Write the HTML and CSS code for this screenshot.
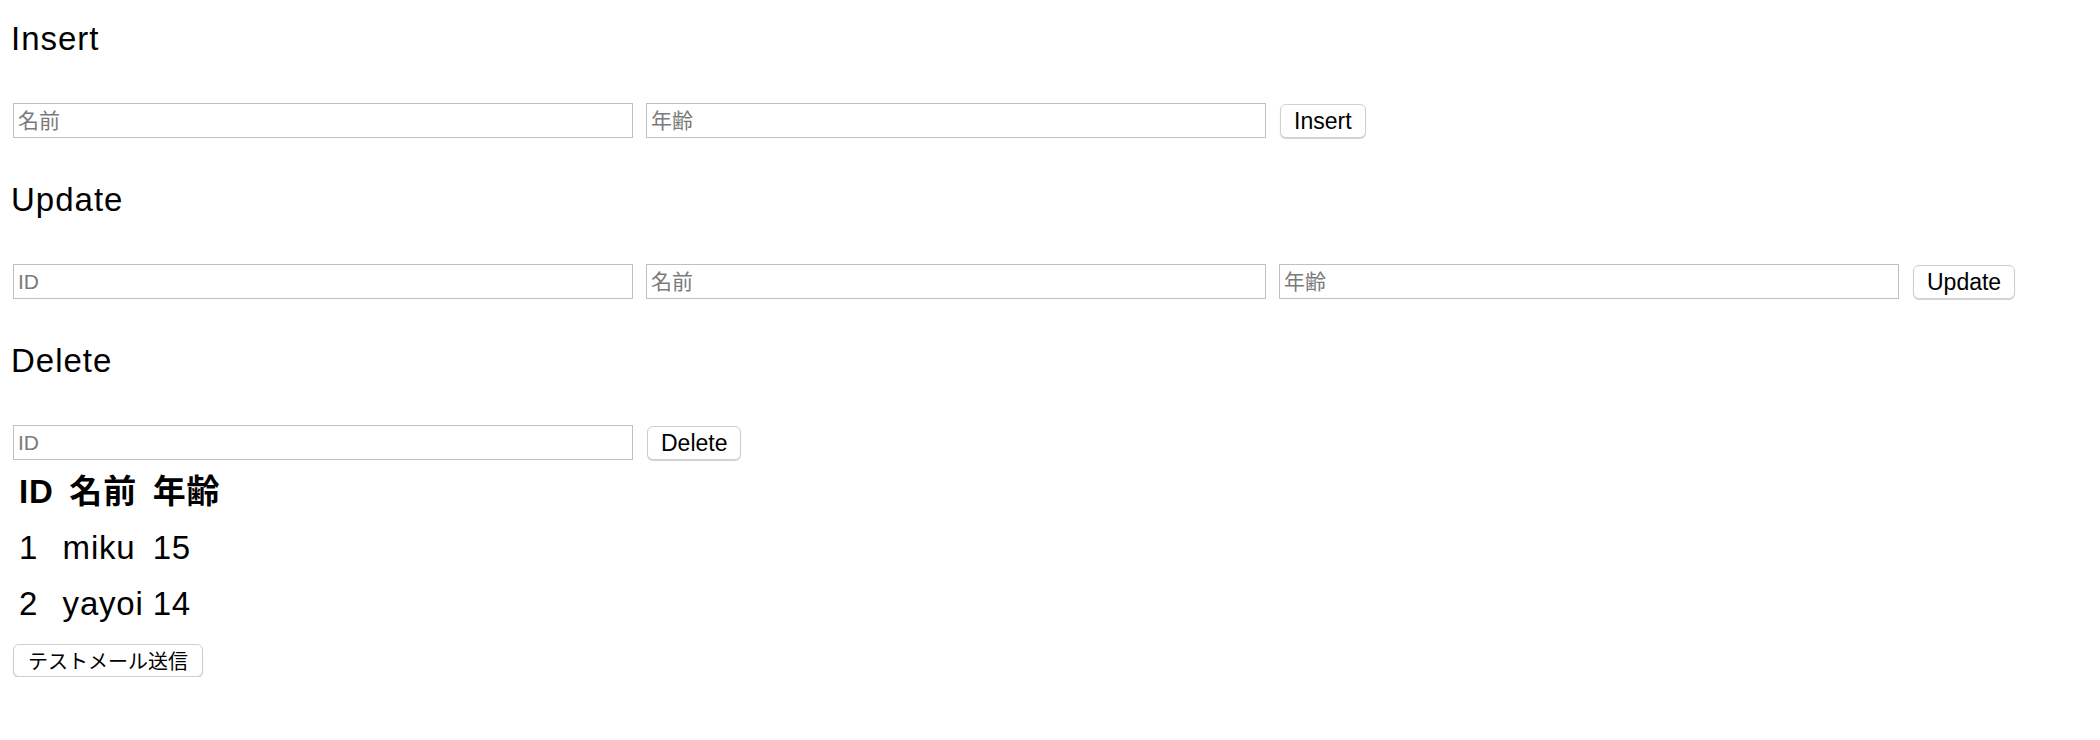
FILE: index.html
```html
<!DOCTYPE html>
<html lang="ja">
<head>
<meta charset="utf-8">
<title>CRUD</title>
<link rel="stylesheet" href="styles.css">
</head>
<body>
<div class="page">
  <h2 class="title first">Insert</h2>
  <div class="form-row">
    <input class="field" type="text" placeholder="名前">
    <input class="field" type="text" placeholder="年齢">
    <button class="btn" type="button">Insert</button>
  </div>

  <h2 class="title">Update</h2>
  <div class="form-row">
    <input class="field" type="text" placeholder="ID">
    <input class="field" type="text" placeholder="名前">
    <input class="field" type="text" placeholder="年齢">
    <button class="btn" type="button">Update</button>
  </div>

  <h2 class="title">Delete</h2>
  <div class="form-row">
    <input class="field" type="text" placeholder="ID">
    <button class="btn" type="button">Delete</button>
  </div>

  <table class="users">
    <thead>
      <tr><th>ID</th><th>名前</th><th>年齢</th></tr>
    </thead>
    <tbody>
      <tr><td>1</td><td>miku</td><td>15</td></tr>
      <tr><td>2</td><td>yayoi</td><td>14</td></tr>
    </tbody>
  </table>

  <button class="btn btn-mail" type="button">テストメール送信</button>
</div>
</body>
</html>
```
FILE: styles.css
```css
html, body {
  margin: 0;
  padding: 0;
  background: #ffffff;
}

body {
  font-family: "Liberation Sans", "Noto Sans CJK JP", sans-serif;
  color: #000000;
}

.page {
  display: flex;
  flex-direction: column;
  align-items: flex-start;
  padding: 0 13px;
}

.title {
  margin: 42px 0 44px -2px;
  font-size: 33px;
  line-height: 40px;
  font-weight: normal;
  letter-spacing: 1px;
}

.title.first {
  margin-top: 19px;
}

.form-row {
  display: flex;
  align-items: flex-start;
  gap: 13px;
}

.field {
  box-sizing: border-box;
  width: 620px;
  height: 35px;
  margin: 0;
  padding: 0 4px;
  border: 1px solid #bfbfbf;
  border-radius: 0;
  background: #ffffff;
  font-family: "Liberation Sans", "Noto Sans CJK JP", sans-serif;
  font-size: 21px;
  color: #000000;
  outline: none;
}

.field::placeholder {
  color: #7a7a7a;
}

.btn {
  box-sizing: border-box;
  height: 34px;
  margin: 1px 0 0 1px;
  padding: 0 13px;
  border: 1px solid #cfcfcf;
  border-radius: 6px;
  background: #ffffff;
  box-shadow: 0 1px 1px rgba(0, 0, 0, 0.18);
  font-family: "Liberation Sans", "Noto Sans CJK JP", sans-serif;
  font-size: 23px;
  line-height: 1;
  color: #000000;
}

.users {
  margin-top: 2px;
  border-collapse: separate;
  border-spacing: 3px;
  font-size: 33px;
  line-height: 49px;
  letter-spacing: 0.8px;
}

.users th,
.users td {
  padding: 2px 3px;
}

.users th {
  font-weight: bold;
  text-align: center;
}

.users td {
  text-align: left;
}

.btn-mail {
  margin: 11px 0 0 0;
  height: 33px;
  padding: 0 14px;
  font-family: "Noto Sans CJK JP", sans-serif;
  font-size: 20px;
}
```
